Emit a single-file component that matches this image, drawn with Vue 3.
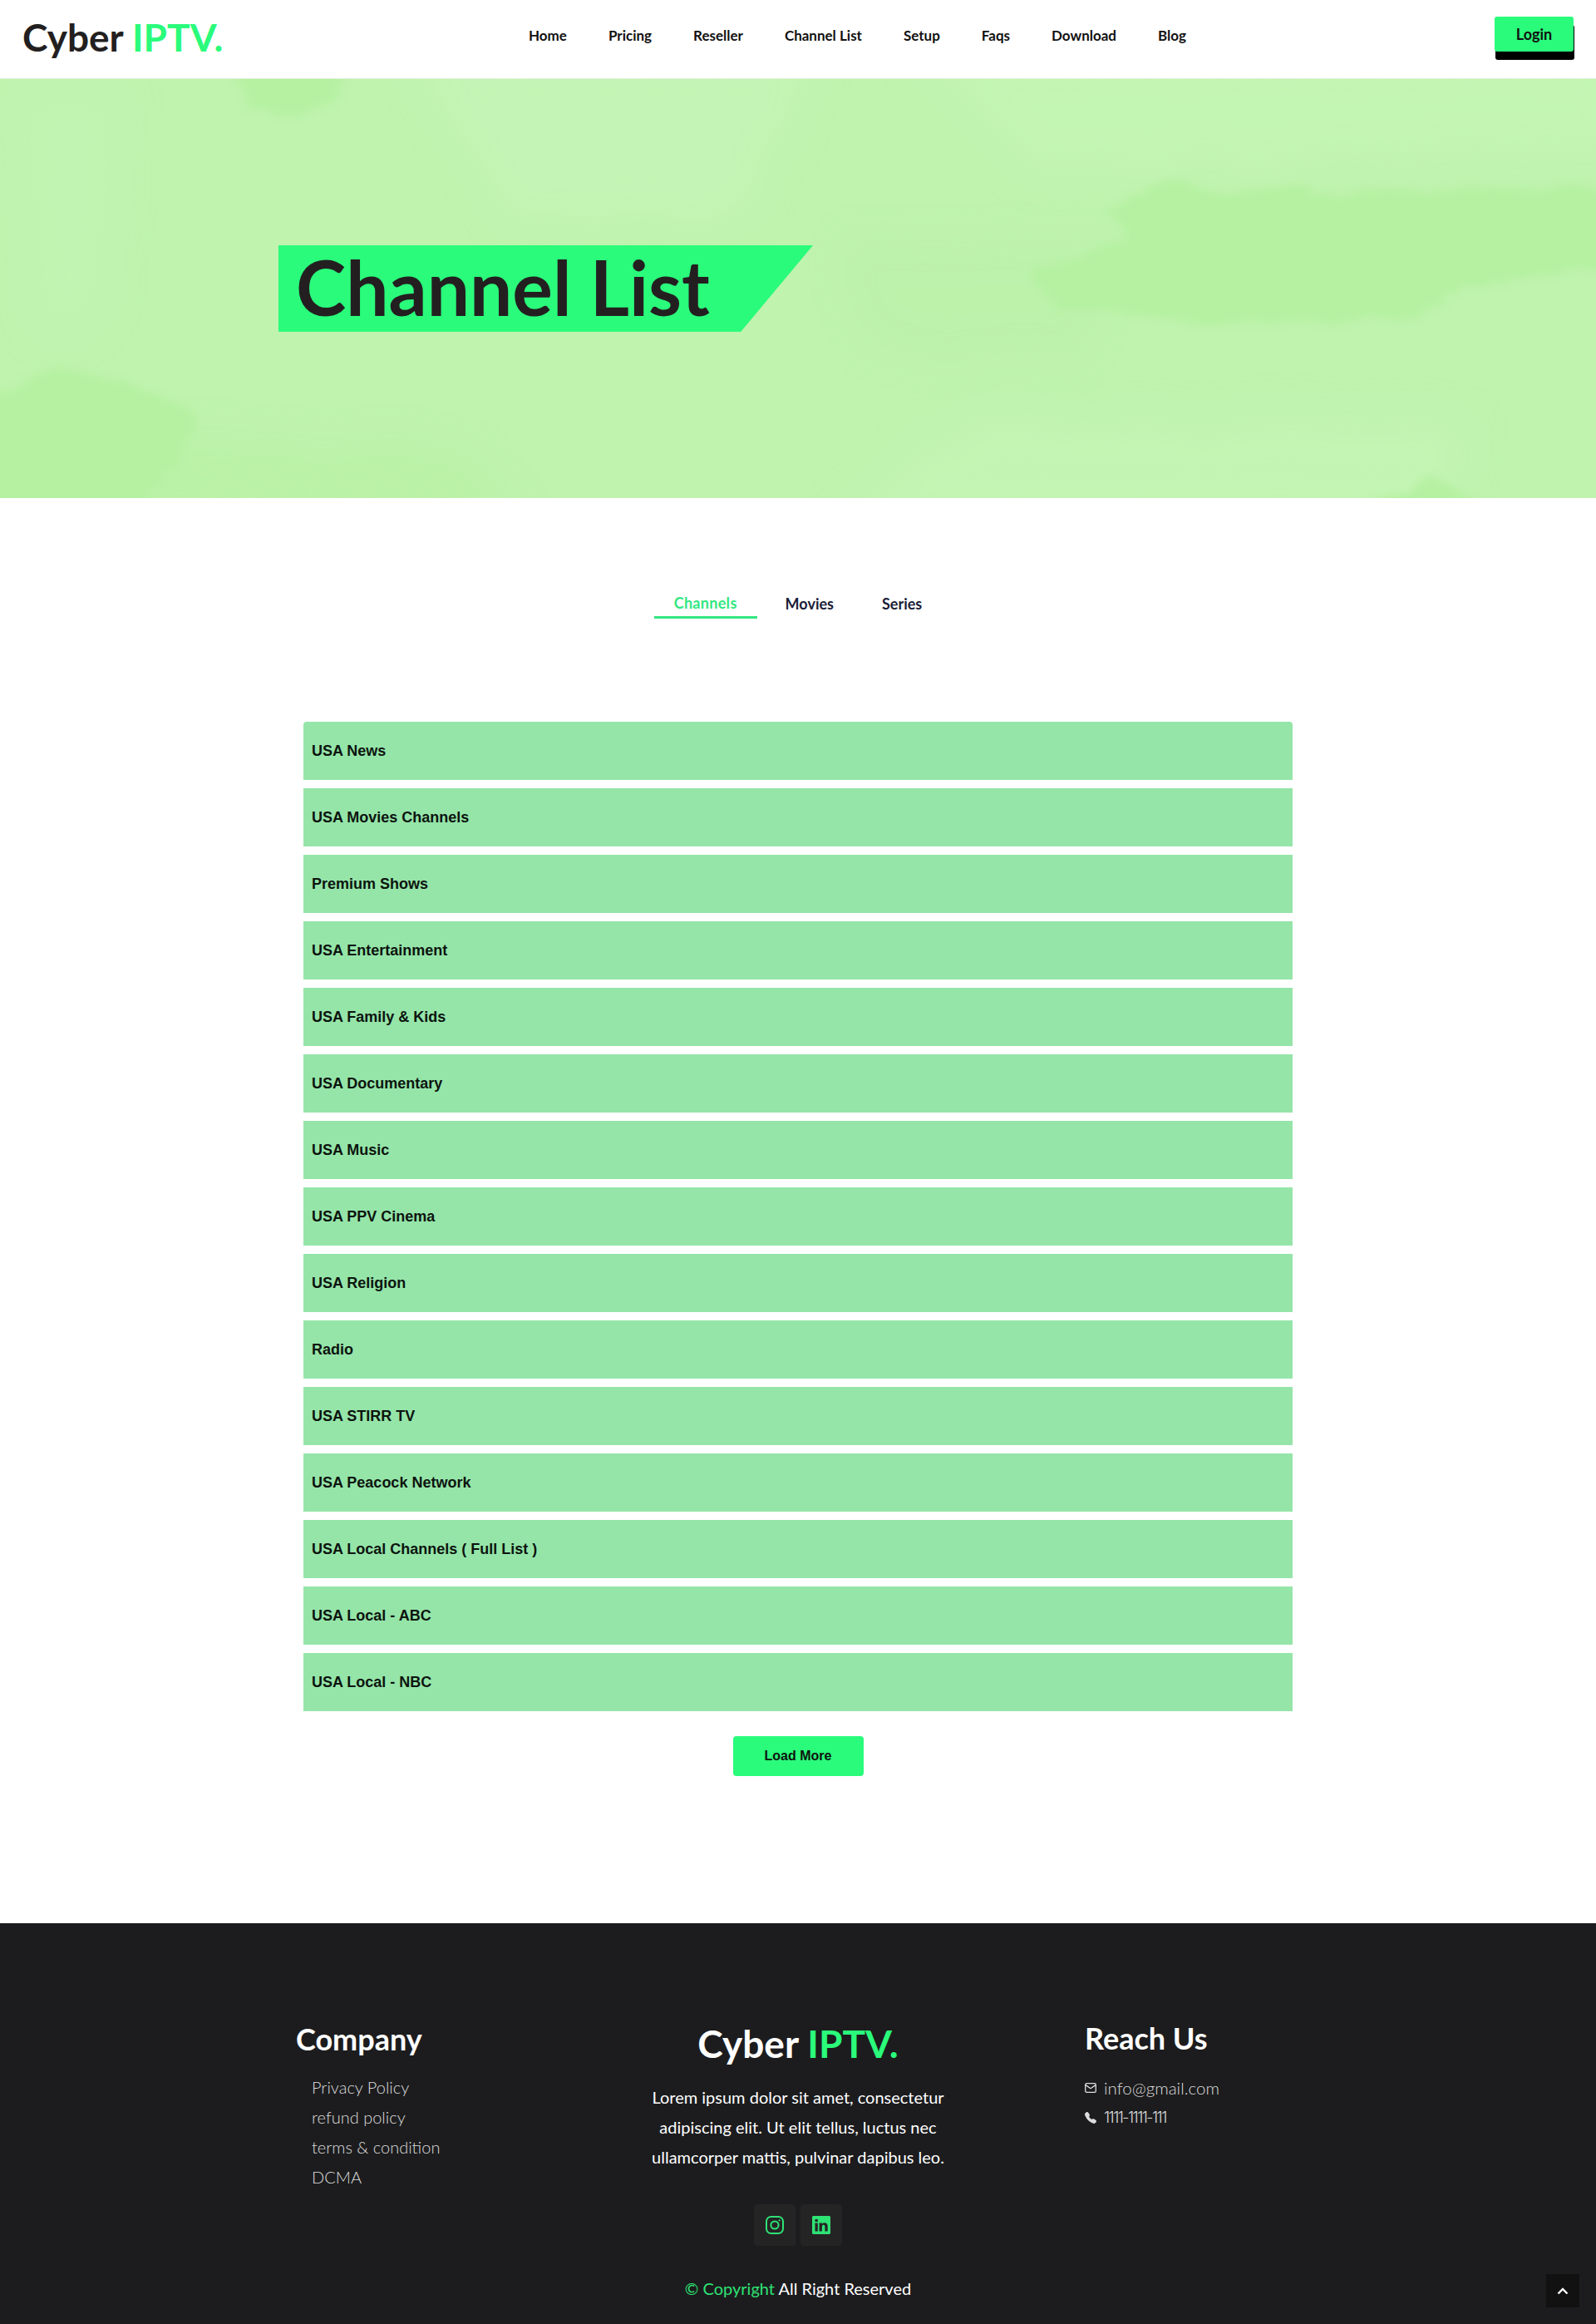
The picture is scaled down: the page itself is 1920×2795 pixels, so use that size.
<template>
  <div class="page">
    <header class="topbar">
      <a class="logo">Cyber <span>IPTV.</span></a>
      <nav class="nav">
        <a v-for="link in navLinks" :key="link">{{ link }}</a>
      </nav>
      <button class="login">Login</button>
    </header>

    <section class="hero">
      <svg class="wash" viewBox="0 0 1920 504" preserveAspectRatio="none" aria-hidden="true">
        <defs>
          <filter id="rough" x="-10%" y="-10%" width="120%" height="120%">
            <feTurbulence type="fractalNoise" baseFrequency="0.012 0.03" numOctaves="4" seed="7" />
            <feDisplacementMap in="SourceGraphic" scale="30" />
            <feGaussianBlur stdDeviation="4" />
          </filter>
          <filter id="soft" x="-20%" y="-20%" width="140%" height="140%">
            <feTurbulence type="fractalNoise" baseFrequency="0.03 0.004" numOctaves="3" seed="3" />
            <feDisplacementMap in="SourceGraphic" scale="50" />
            <feGaussianBlur stdDeviation="22" />
          </filter>
        </defs>
        <g filter="url(#soft)" fill="#c6f5b8">
          <polygon points="490,-30 980,-30 900,170 620,170" opacity=".8" />
          <polygon points="1100,-30 1950,-30 1950,90 1250,120" opacity=".55" />
          <polygon points="1160,410 1770,410 1720,530 1000,530" opacity=".6" />
          <polygon points="20,20 160,20 120,300 40,300" opacity=".4" />
        </g>
        <g filter="url(#soft)" fill="#b8f1a4">
          <polygon points="0,430 560,450 620,530 0,530" opacity=".6" />
          <polygon points="1000,200 1350,200 1300,330 1050,330" opacity=".25" />
        </g>
        <g filter="url(#rough)" fill="#b6f1a2">
          <polygon points="1335,162 1420,122 1469,135 1950,132 1950,222 1763,255 1714,282 1469,295 1273,278 1237,235 1286,208 1359,192 1347,175" />
          <polygon points="-30,392 73,355 147,362 227,395 233,428 159,530 -30,530" />
          <polygon points="270,-30 430,-30 400,20 360,44 300,36" />
          <polygon points="1628,530 1714,472 1812,530" />
        </g>
      </svg>
      <div class="title-tag">
        <h1>Channel List</h1>
      </div>
    </section>

    <main class="content">
      <div class="tabs">
        <button
          v-for="tab in tabs"
          :key="tab"
          class="tab"
          :class="{ active: tab === activeTab }"
          @click="activeTab = tab"
        >{{ tab }}</button>
      </div>

      <div class="channels">
        <div v-for="channel in channels" :key="channel" class="channel">{{ channel }}</div>
      </div>

      <button class="load-more">Load More</button>
    </main>

    <footer class="footer">
      <div class="footer-grid">
        <div class="company">
          <h3>Company</h3>
          <ul>
            <li v-for="link in companyLinks" :key="link">{{ link }}</li>
          </ul>
        </div>

        <div class="about">
          <a class="logo">Cyber <span>IPTV.</span></a>
          <p>Lorem ipsum dolor sit amet, consectetur adipiscing elit. Ut elit tellus, luctus nec ullamcorper mattis, pulvinar dapibus leo.</p>
          <div class="socials">
            <a class="social">
              <svg width="24" height="24" viewBox="0 0 24 24" fill="none" stroke="#2ee274" stroke-width="2">
                <rect x="2" y="2" width="20" height="20" rx="5.5" />
                <circle cx="12" cy="12" r="4.6" />
                <circle cx="17.6" cy="6.4" r=".7" fill="#2ee274" stroke-width="1" />
              </svg>
            </a>
            <a class="social">
              <svg width="22" height="22" viewBox="0 0 16 16" fill="#2ee274">
                <path d="M0 1.146C0 .513.526 0 1.175 0h13.65C15.474 0 16 .513 16 1.146v13.708c0 .633-.526 1.146-1.175 1.146H1.175C.526 16 0 15.487 0 14.854V1.146zm4.943 12.248V6.169H2.542v7.225h2.401zm-1.2-8.212c.837 0 1.358-.554 1.358-1.248-.015-.709-.52-1.248-1.342-1.248-.822 0-1.359.54-1.359 1.248 0 .694.521 1.248 1.327 1.248h.016zm4.908 8.212V9.359c0-.216.016-.432.08-.586.173-.431.568-.878 1.232-.878.869 0 1.216.662 1.216 1.634v3.865h2.401V9.25c0-2.22-1.184-3.252-2.764-3.252-1.274 0-1.845.7-2.165 1.193v.025h-.016a5.54 5.54 0 0 1 .016-.025V6.169h-2.4c.03.678 0 7.225 0 7.225h2.4z" />
              </svg>
            </a>
          </div>
          <div class="copyright"><span>© Copyright</span> All Right Reserved</div>
        </div>

        <div class="reach">
          <h3>Reach Us</h3>
          <div class="contact">
            <svg width="14" height="12" viewBox="0 0 14 12" fill="none" stroke="#ddd" stroke-width="1.3">
              <rect x=".7" y=".7" width="12.6" height="10.6" rx="1.6" />
              <path d="M1 2.6 7 6.8l6-4.2" />
            </svg>
            <span>info@gmail.com</span>
          </div>
          <div class="contact">
            <svg width="14" height="14" viewBox="0 0 16 16" fill="#ddd">
              <path d="M1.885.511a1.745 1.745 0 0 1 2.61.163L6.29 2.98c.329.423.445.974.315 1.494l-.547 2.19a.678.678 0 0 0 .178.643l2.457 2.457a.678.678 0 0 0 .644.178l2.189-.547a1.745 1.745 0 0 1 1.494.315l2.306 1.794c.829.645.905 1.87.163 2.611l-1.034 1.034c-.74.74-1.846 1.065-2.877.702a18.634 18.634 0 0 1-7.01-4.42 18.634 18.634 0 0 1-4.42-7.009c-.362-1.03-.037-2.137.703-2.877L1.885.511z" />
            </svg>
            <span class="phone">1111-1111-111</span>
          </div>
        </div>
      </div>

      <button class="to-top" aria-label="Back to top">
        <svg width="14" height="9" viewBox="0 0 14 9" fill="none" stroke="#fff" stroke-width="2.4">
          <path d="M1.5 7.5 7 2l5.500 5.500" />
        </svg>
      </button>
    </footer>
  </div>
</template>

<script setup>
import { ref } from 'vue';

const navLinks = ['Home', 'Pricing', 'Reseller', 'Channel List', 'Setup', 'Faqs', 'Download', 'Blog'];
const tabs = ['Channels', 'Movies', 'Series'];
const activeTab = ref('Channels');

const channels = [
  'USA News',
  'USA Movies Channels',
  'Premium Shows',
  'USA Entertainment',
  'USA Family & Kids',
  'USA Documentary',
  'USA Music',
  'USA PPV Cinema',
  'USA Religion',
  'Radio',
  'USA STIRR TV',
  'USA Peacock Network',
  'USA Local Channels ( Full List )',
  'USA Local - ABC',
  'USA Local - NBC',
];

const companyLinks = ['Privacy Policy', 'refund policy', 'terms & condition', 'DCMA'];
</script>

<style scoped>
.page {
  font-family: 'Lato', 'Open Sans', sans-serif;
  color: #231f20;
  background: #fff;
}

button {
  border: none;
  cursor: pointer;
}

.topbar {
  display: flex;
  align-items: center;
  height: 95px;
  box-sizing: border-box;
  padding: 0 27px 5px 27px;
  border-bottom: 1px solid #e4efe0;
}

.logo {
  font-size: 46px;
  font-weight: 700;
  line-height: 1;
  white-space: nowrap;
}

.logo span {
  color: #2afb7b;
}

.topbar .logo {
  width: 609px;
  color: #231f20;
}

.nav {
  display: flex;
  gap: 50px;
  margin-top: -5px;
}

.nav a {
  font-size: 17px;
  font-weight: 700;
  color: #111;
}

.login {
  margin-left: auto;
  width: 95px;
  height: 42px;
  margin-top: -8px;
  border-radius: 3px;
  background: #2afb7b;
  box-shadow: 1px 10px 0 #000;
  font-family: inherit;
  font-size: 18px;
  font-weight: 700;
  color: #111;
}

.hero {
  position: relative;
  height: 504px;
  padding: 200px 0 0 335px;
  box-sizing: border-box;
  background: #bff3ae;
  overflow: hidden;
}

.wash {
  position: absolute;
  inset: 0;
  width: 100%;
  height: 100%;
}

.title-tag {
  position: relative;
  width: 643px;
  height: 104px;
  padding-left: 21px;
  box-sizing: border-box;
  background: #2afb7b;
  clip-path: polygon(0 0, 100% 0, 86.5% 100%, 0 100%);
}

.title-tag h1 {
  margin: 0;
  font-size: 91px;
  font-weight: 700;
  line-height: 100px;
  color: #231f20;
}

.content {
  display: flex;
  flex-direction: column;
  align-items: center;
  padding: 109px 0 177px;
}

.tabs {
  display: flex;
  gap: 10px;
}

.tab {
  height: 36px;
  padding: 2px 24px 0;
  background: none;
  border-bottom: 3px solid transparent;
  font-family: inherit;
  font-size: 18px;
  font-weight: 700;
  color: #1a1d36;
}

.tab.active {
  padding-top: 0;
  color: #33e77f;
  border-bottom-color: #33e77f;
  letter-spacing: .3px;
}

.channels {
  display: flex;
  flex-direction: column;
  gap: 10px;
  width: 1190px;
  margin-top: 124px;
}

.channel {
  display: flex;
  align-items: center;
  height: 70px;
  padding-left: 10px;
  background: #95e5a9;
  font-family: 'Liberation Sans', Arial, sans-serif;
  font-size: 18px;
  font-weight: 700;
  color: #0c140e;
}

.channel:first-child {
  border-radius: 4px 4px 0 0;
}

.load-more {
  width: 157px;
  height: 48px;
  margin-top: 30px;
  border-radius: 4px;
  background: #2afb7b;
  font-family: 'Liberation Sans', Arial, sans-serif;
  font-size: 16px;
  font-weight: 700;
  color: #0c140e;
}

.footer {
  position: relative;
  height: 482px;
  box-sizing: border-box;
  padding: 116px 0 0 356px;
  background: #1c1c1e;
  color: #fff;
}

.footer-grid {
  display: grid;
  grid-template-columns: 364px 480px auto;
}

.footer h3 {
  margin: 0;
  font-size: 36px;
  font-weight: 700;
  line-height: 52px;
}

.company h3 {
  margin-top: -3px;
}

.company ul {
  margin: 14px 0 0;
  padding: 0 0 0 19px;
  list-style: none;
}

.company li {
  font-size: 20px;
  font-weight: 300;
  line-height: 36px;
  color: #ddd;
}

.about {
  display: flex;
  flex-direction: column;
  align-items: center;
  text-align: center;
}

.about .logo {
  margin-top: 6px;
  color: #fff;
}

.about p {
  width: 380px;
  margin: 23px 0 0;
  font-size: 20px;
  font-weight: 400;
  line-height: 36px;
}

.socials {
  display: flex;
  gap: 6px;
  margin-top: 39px;
}

.social {
  display: flex;
  align-items: center;
  justify-content: center;
  width: 50px;
  height: 50px;
  border-radius: 4px;
  background: #252425;
}

.copyright {
  margin-top: 36px;
  font-size: 20px;
  line-height: 30px;
}

.copyright span {
  color: #2ee274;
}

.reach {
  padding-left: 105px;
}

.reach h3 {
  margin-top: -4px;
}

.contact {
  display: flex;
  align-items: center;
  gap: 9px;
  font-size: 20.5px;
  font-weight: 300;
  line-height: 36px;
  color: #ddd;
}

.phone {
  font-family: 'Inter', sans-serif;
  font-size: 18px;
  letter-spacing: -1.5px;
}

.reach h3 + .contact {
  margin-top: 16px;
}

.to-top {
  position: absolute;
  right: 20px;
  bottom: 20px;
  display: flex;
  align-items: center;
  justify-content: center;
  width: 40px;
  height: 40px;
  padding: 0;
  background: #111;
}
</style>

<style>
body {
  background: #fff;
}
</style>
